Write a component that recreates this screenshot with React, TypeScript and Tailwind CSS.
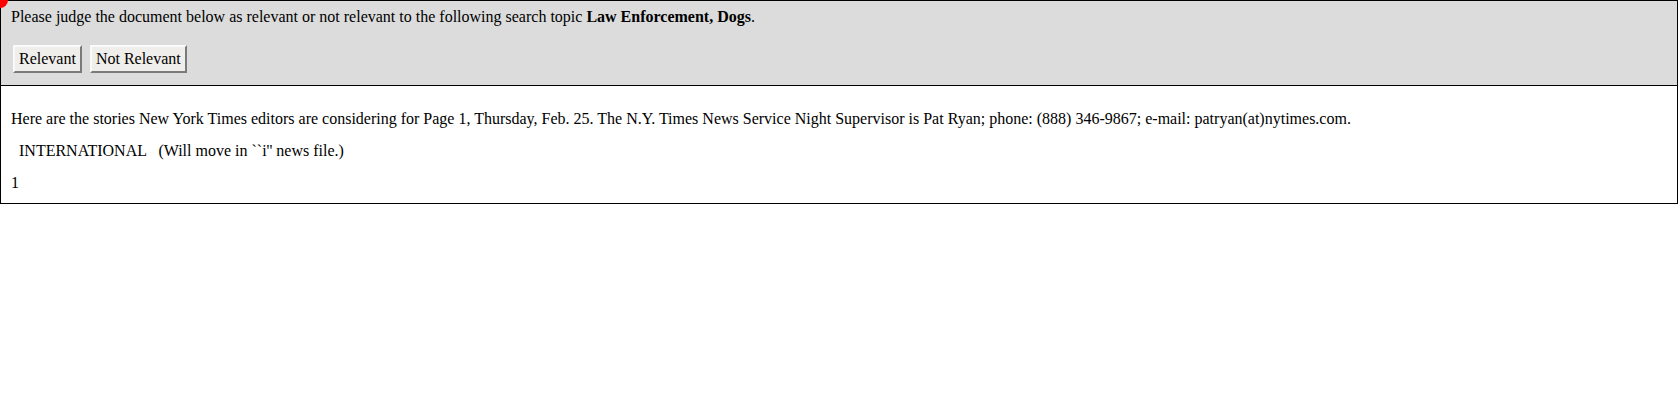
import React from 'react';

const serif = { fontFamily: '"Liberation Serif", "Times New Roman", serif' };

const Btn: React.FC<{ label: string }> = ({ label }) => (
  <button
    className="h-[28px] px-[4px] bg-[#f0eeea] border-2 border-t-[#fafafa] border-l-[#fafafa] border-b-[#7a7a7a] border-r-[#7a7a7a] text-[16px] leading-[18px] text-black"
    style={serif}
  >
    {label}
  </button>
);

export default function App() {
  return (
    <div className="relative w-[1678px] text-[16px] leading-[18px] text-black" style={serif}>
      <div className="absolute -top-[8px] -left-[8px] w-[16px] h-[16px] rounded-full bg-[#ff0000]" />

      <div className="bg-[#dcdcdc] border border-black pl-[10px] pt-[7px] pb-[12px]">
        <p>
          Please judge the document below as relevant or not relevant to the following search topic{' '}
          <b>Law Enforcement, Dogs</b>.
        </p>
        <div className="flex gap-[8px] mt-[19px] pl-[2px]">
          <Btn label="Relevant" />
          <Btn label="Not Relevant" />
        </div>
      </div>

      <div className="border border-t-0 border-black pl-[10px] pt-[24px] pb-[11px] flex flex-col gap-[14px]">
        <p>
          Here are the stories New York Times editors are considering for Page 1, Thursday, Feb. 25. The N.Y. Times News
          Service Night Supervisor is Pat Ryan; phone: (888) 346-9867; e-mail: patryan(at)nytimes.com.
        </p>
        <p className="whitespace-pre">  INTERNATIONAL   (Will move in ``i'' news file.)</p>
        <p>1</p>
      </div>
    </div>
  );
}
